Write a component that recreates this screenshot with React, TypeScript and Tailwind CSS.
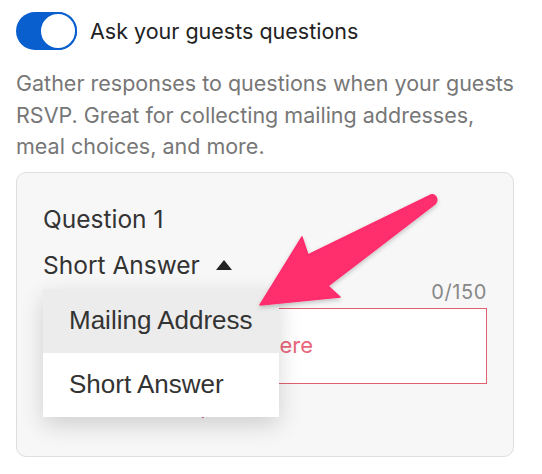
import React from "react";

function Arrow() {
  return (
    <svg
      className="absolute left-0 top-0 pointer-events-none"
      width="542"
      height="474"
      viewBox="0 0 542 474"
    >
      <defs>
        <filter id="sh" x="-20%" y="-20%" width="140%" height="140%">
          <feDropShadow dx="0" dy="2" stdDeviation="2" floodColor="#000" floodOpacity="0.22" />
        </filter>
      </defs>
      <path
        d="M429 196 Q433 193 436 197 Q438 201 435 204 L328 286 L340 297 L260 305 L302 237 L308 255 Z"
        fill="#ff2d6d"
        stroke="#ff2d6d"
        strokeWidth="1.5"
        strokeLinejoin="round"
        filter="url(#sh)"
      />
    </svg>
  );
}

export default function App() {
  return (
    <div
      className="relative w-[542px] h-[474px] overflow-hidden bg-white"
      style={{ fontFamily: "Inter, 'Noto Sans', sans-serif" }}
    >
      <div className="pl-4 pt-3">
        {/* toggle row */}
        <div className="flex items-center gap-[13px]">
          <div className="relative w-[61px] h-[38px] rounded-full bg-[#0a5fcf]">
            <div className="absolute right-0 top-0 w-[38px] h-[38px] rounded-full bg-white border-2 border-[#0a5fcf]" />
          </div>
          <span className="text-[21.5px] text-[#222] leading-[30px]">Ask your guests questions</span>
        </div>

        <p className="mt-[18px] w-[500px] text-[21.5px] leading-[31.5px] text-[#777]">
          Gather responses to questions when your guests RSVP. Great for collecting mailing addresses,
          meal choices, and more.
        </p>

        {/* card */}
        <div className="mt-[9px] w-[498px] h-[285px] rounded-[10px] border border-[#dedede] bg-[#f7f7f7] px-[26px] pt-[31px]">
          <div className="text-[24.5px] text-[#333] leading-[30px]">Question 1</div>
          <div className="mt-[16px] flex items-center gap-[16px] text-[24.5px] text-[#333] leading-[30px]">
            <span>Short Answer</span>
            <svg width="16" height="10" viewBox="0 0 16 10">
              <path d="M8 0 L16 10 L0 10 Z" fill="#222" />
            </svg>
          </div>
          <div className="relative">
            <div className="text-right text-[20px] tracking-[0.6px] text-[#888] leading-[24px]">0/150</div>
            <div className="mt-[4px] h-[76px] border border-[#e0606f] bg-white flex items-center">
              <div className="w-[269px] text-right whitespace-nowrap text-[22px] text-[#e8677a]">
                Type your question here
              </div>
            </div>
            <div className="mt-[15px] pl-[40px] text-[16px] leading-[20px] text-[#e0405a]">
              Please enter a question
            </div>

            {/* dropdown */}
            <div
              className="absolute left-0 top-[9px] w-[236px] bg-white shadow-[0_8px_22px_rgba(0,0,0,0.16)]"
              style={{ fontFamily: "'Liberation Sans', Arial, sans-serif" }}
            >
              <div className="h-[64px] bg-[#ececec] flex items-center pl-[26px] text-[26px] text-[#333]">
                Mailing Address
              </div>
              <div className="h-[64px] flex items-center pl-[26px] text-[26px] text-[#333]">Short Answer</div>
            </div>
          </div>
        </div>
      </div>
      <Arrow />
    </div>
  );
}
